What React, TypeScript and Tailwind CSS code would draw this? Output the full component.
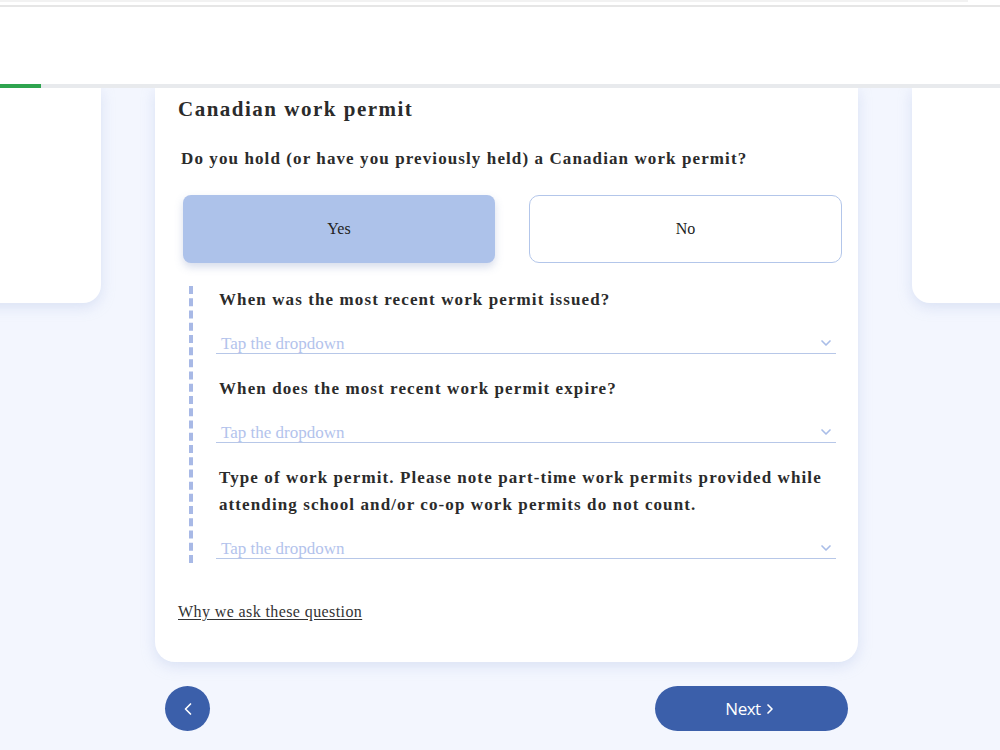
import { ChevronDown, ChevronLeft, ChevronRight } from 'lucide-react'

const serif = "font-['Liberation_Serif','Times_New_Roman',serif]"

interface DropdownFieldProps {
  label: string[]
}

function DropdownField({ label }: DropdownFieldProps) {
  return (
    <div className="flex flex-col">
      <p className="text-[17px] font-bold leading-[27px] tracking-[1.1px] text-[#2b2b2b]">
        {label.map((line) => (
          <span key={line} className="block">
            {line}
          </span>
        ))}
      </p>
      <div className="mt-[18px] -ml-[3px] flex h-[23px] items-end justify-between border-b border-[#b7c7e8] pl-[5px] pr-[2px]">
        <span className="text-[17px] leading-[18px] text-[#b3c3ec]">Tap the dropdown</span>
        <ChevronDown className="mb-[2px] h-4 w-4 text-[#a9bde8]" strokeWidth={2.5} />
      </div>
    </div>
  )
}

export default function App() {
  return (
    <div className={`flex h-[750px] w-full flex-col overflow-hidden bg-[#f3f6fe] ${serif}`}>
      {/* Header */}
      <header className="relative z-10 h-[84px] bg-white">
        <div className="h-[2px] w-[968px] bg-[#f2f2f2]" />
        <div className="mt-[3px] h-[2px] w-full bg-[#e6e6e6]" />
      </header>
      <div className="relative z-10 h-[4px] w-full bg-[#e8eaed]">
        <div className="h-full w-[41px] bg-[#2ea44f]" />
      </div>

      {/* Carousel */}
      <div className="flex items-start gap-[54px]">
        <div className="ml-[-602px] h-[215px] w-[703px] shrink-0 rounded-b-[18px] bg-white shadow-[0_4px_14px_rgba(170,185,225,0.35)]" />

        <div className="flex h-[574px] w-[703px] shrink-0 flex-col rounded-b-[20px] bg-white pl-[23px] pr-[16px] shadow-[0_4px_14px_rgba(170,185,225,0.35)]">
          <h1 className="mt-[8px] text-[21px] font-bold leading-[26px] tracking-[1.5px] text-[#2b2b2b]">
            Canadian work permit
          </h1>
          <p className="mt-[26px] pl-[3px] text-[17px] font-bold leading-[22px] tracking-[1.1px] text-[#2b2b2b]">
            Do you hold (or have you previously held) a Canadian work permit?
          </p>

          <div className="mt-[25px] flex gap-[34px] pl-[5px]">
            <button className="h-[68px] w-[312px] rounded-[8px] bg-[#adc2ea] text-[16px] text-[#222] shadow-[0_4px_8px_rgba(120,140,190,0.3)]">
              Yes
            </button>
            <button className="h-[68px] w-[313px] rounded-[10px] border border-[#b3c6ea] bg-white text-[16px] text-[#222]">
              No
            </button>
          </div>

          <div className="mt-[23px] ml-[11px] flex flex-col gap-[21px] border-l-[4px] border-dashed border-[#a8b9e6] pl-[26px] pr-[6px] pb-[4px]">
            <DropdownField label={['When was the most recent work permit issued?']} />
            <DropdownField label={['When does the most recent work permit expire?']} />
            <DropdownField
              label={[
                'Type of work permit. Please note part-time work permits provided while',
                'attending school and/or co-op work permits do not count.',
              ]}
            />
          </div>

          <a href="#" className="mt-[39px] w-fit text-[16px] leading-[20px] tracking-[0.4px] text-[#333] underline underline-offset-2">
            Why we ask these question
          </a>
        </div>

        <div className="h-[215px] w-[703px] shrink-0 rounded-b-[18px] bg-white shadow-[0_4px_14px_rgba(170,185,225,0.35)]" />
      </div>

      {/* Navigation */}
      <div className="mt-[24px] ml-[155px] flex w-[703px] items-center justify-between px-[10px]">
        <button className="flex h-[45px] w-[45px] items-center justify-center rounded-full bg-[#3b5faa] text-white">
          <ChevronLeft className="h-5 w-5" strokeWidth={2} />
        </button>
        <button className="flex h-[45px] w-[193px] items-center justify-center gap-[1px] rounded-full bg-[#3b5faa] font-['Open_Sans',sans-serif] text-[17px] tracking-[-0.5px] text-white">
          Next
          <ChevronRight className="h-4 w-4" strokeWidth={2.5} />
        </button>
      </div>
    </div>
  )
}
